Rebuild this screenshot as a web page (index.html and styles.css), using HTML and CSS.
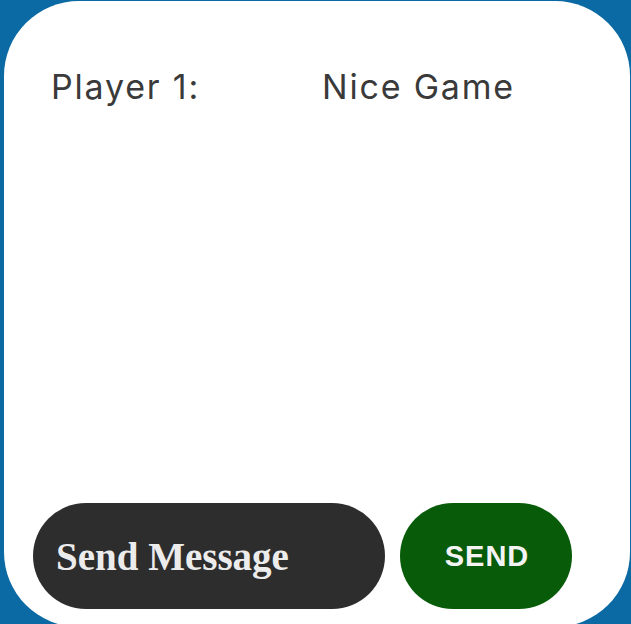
FILE: index.html
```html
<!DOCTYPE html>
<html>
<head>
<meta charset="utf-8">
<link rel="stylesheet" href="styles.css">
</head>
<body>
<div class="card">
  <div class="messages">
    <div class="msg">
      <span class="who">Player 1:</span>
      <span class="text">Nice Game</span>
    </div>
  </div>
  <div class="composer">
    <div class="input">Send Message</div>
    <button class="send">SEND</button>
  </div>
</div>
</body>
</html>
```
FILE: styles.css
```css
html, body {
  margin: 0;
  padding: 0;
  background: #0b69a3;
  overflow: hidden;
  height: 624px;
}
.card {
  margin: 1px 0 0 4px;
  width: 626px;
  height: 626px;
  box-sizing: border-box;
  background: #fff;
  border-radius: 75px;
  display: flex;
  flex-direction: column;
  padding: 64px 0 0 0;
}
.messages {
  flex: 1;
  padding-left: 47px;
}
.msg {
  display: flex;
  font-family: Inter, "Liberation Sans", sans-serif;
  font-size: 34px;
  letter-spacing: 1.8px;
  color: #3a3a3a;
  line-height: 44px;
}
.who {
  width: 271px;
}
.composer {
  display: flex;
  gap: 15px;
  padding: 0 0 18px 29px;
}
.input {
  width: 352px;
  height: 106px;
  border-radius: 53px;
  background: #2d2d2d;
  color: #ececec;
  font-family: "Liberation Serif", serif;
  font-weight: 700;
  font-size: 39px;
  display: flex;
  align-items: center;
  padding-left: 23px;
  box-sizing: border-box;
}
.send {
  width: 172px;
  height: 106px;
  border-radius: 53px;
  border: none;
  background: #075b09;
  color: #f4f4f4;
  font-family: "Liberation Sans", sans-serif;
  font-weight: 700;
  font-size: 29px;
  letter-spacing: 1px;
  padding: 0 0 0 2px;
}
```
